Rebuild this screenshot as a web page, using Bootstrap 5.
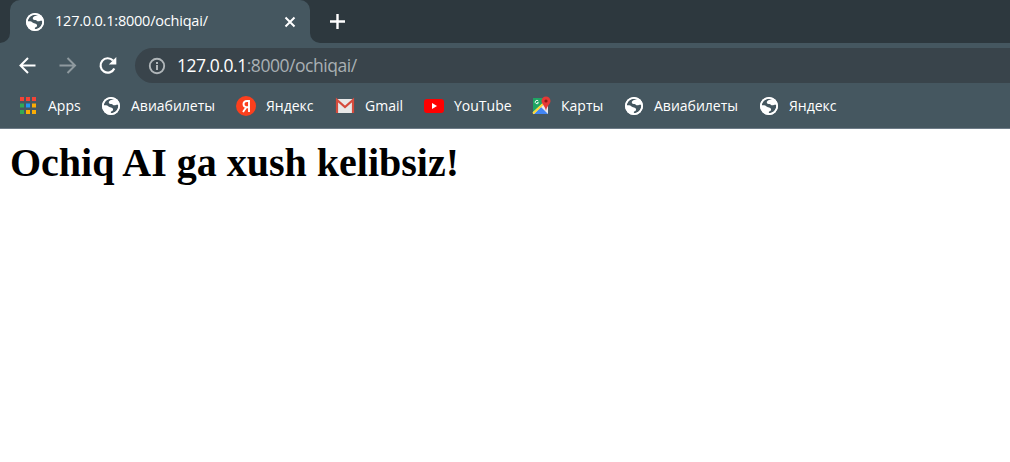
<!DOCTYPE html>
<html lang="uz">
<head>
<meta charset="utf-8">
<title>127.0.0.1:8000/ochiqai/</title>
<link href="https://cdn.jsdelivr.net/npm/bootstrap@5.3.0/dist/css/bootstrap.min.css" rel="stylesheet">
<style>
body{background:#fff;font-family:"Open Sans","Noto Sans",sans-serif;overflow:hidden}
.chrome-ui{background:#455760;border-bottom:1px solid #6d7b87;height:129px;color:#fff}
.tab-strip{height:43px;background:#2d383e}
.tab-edge{width:10px;background:#455760}
.tab-edge i{display:block;height:43px;background:#2d383e;border-bottom-right-radius:10px}
.tab-edge.after i{border-radius:0 0 0 10px}
.active-tab{width:300px;background:#455760;border-radius:10px 10px 0 0;padding:0 14px 0 15px}
.tab-name{font-size:14.5px;margin-left:10px;letter-spacing:-.21px;line-height:20px;margin-top:-2px}
.tool-row{height:45px;padding-left:18px}
.arrow-gap{margin-left:20px}
.address{height:35px;background:#39444b;border-radius:18px 0 0 18px;margin-left:16px;padding-left:13px}
.url{font-size:17.5px;letter-spacing:-.46px;margin-left:11px;line-height:24px;color:#a9b0b4;margin-top:-1px}
.url b{font-weight:400;color:#fff}
.marks{height:40px;padding:0 0 4px 18px;font-size:14px}
.marks a{color:#fff;text-decoration:none;line-height:20px}
.marks svg{width:20px;height:20px;margin-right:10px}
.marks span{letter-spacing:0}
svg{display:block;flex:none}
h1{font:700 40px/46px "Liberation Serif",serif;color:#000;margin:11px 0 0 10px}
</style>
</head>
<body>
<svg width="0" height="0" class="position-absolute"><defs>
<symbol id="globe" viewBox="0 0 20 20"><circle cx="10" cy="10" r="9" fill="#fff"/><path d="M13.500 3.500C11 3.200 7.800 4.500 7.800 6.400c0 1.400 1.500 1.500 2.700 1.500s1.300 1.400 2.800 1.400 2-.9 4-.6c.3 3.500-1.500 6.500-4.400 7.900-.8.400-2 .6-3 .6V15.700c1-.6 2.200-1 2.200-2.300S10.500 11.600 9 11.300 7 9.300 5 9.300H2.800C3 6 6 2.700 10 2.700z" fill="#455760"/><circle cx="10" cy="10" r="8.200" fill="none" stroke="#fff" stroke-width="1.700"/></symbol>
</defs></svg>
<header class="chrome-ui">
<div class="tab-strip d-flex">
<div class="tab-edge"><i></i></div>
<div class="active-tab d-flex align-items-center"><svg width="20" height="20"><use href="#globe"/></svg><span class="tab-name">127.0.0.1:8000/ochiqai/</span><svg class="ms-auto" width="12" height="12" viewBox="0 0 12 12"><path d="M1.500 1.500l9 9m0-9l-9 9" stroke="#fff" stroke-width="2"/></svg></div>
<div class="tab-edge after"><i></i></div>
<svg class="align-self-center ms-2" width="20" height="20" viewBox="0 0 20 20"><path d="M9.500 2v15M2 9.500h15" stroke="#fff" stroke-width="2.400"/></svg>
</div>
<div class="tool-row d-flex align-items-center">
<svg width="20" height="20" viewBox="0 0 20 20" fill="none" stroke="#fff" stroke-width="2"><path d="M17.500 9.500H3M10 2L2.500 9.500 10 17"/></svg>
<svg class="arrow-gap" width="20" height="20" viewBox="0 0 20 20" fill="none" stroke="#8f9a9f" stroke-width="2"><path d="M1.500 9.500H16M9.500 2L17 9.500 9.500 17"/></svg>
<svg class="arrow-gap" width="21" height="20" viewBox="0 0 21 20"><path d="M15 4.500A7.200 7.200 0 1 0 16.300 12.500" fill="none" stroke="#fff" stroke-width="2.200"/><path d="M18.300 1v7.500h-7.500z" fill="#fff"/></svg>
<div class="address flex-grow-1 d-flex align-items-center"><svg width="18" height="18" viewBox="0 0 18 18"><circle cx="9" cy="9" r="7.200" fill="none" stroke="#b0b6b9" stroke-width="1.900"/><path d="M9 8v5M9 5v2" stroke="#b0b6b9" stroke-width="2"/></svg><span class="url"><b>127.0.0.1</b>:8000/ochiqai/</span></div>
</div>
<nav class="marks d-flex align-items-center">
<a href="#" class="d-flex align-items-center" style="width:83px"><svg viewBox="0 0 20 20"><path d="M2 1h4v4H2zM8 1h4v4H8zM14 1h4v4h-4z" fill="#f44336"/><path d="M2 7.500h4v4H2zM2 14h4v4H2z" fill="#34a853"/><path d="M8 7.500h4v4H8z" fill="#2196f3"/><path d="M14 7.500h4v4h-4zM14 14h4v4h-4zM8 14h4v4H8z" fill="#fbac05"/></svg><span>Apps</span></a>
<a href="#" class="d-flex align-items-center" style="width:135px"><svg><use href="#globe"/></svg><span>Авиабилеты</span></a>
<a href="#" class="d-flex align-items-center" style="width:99px"><svg viewBox="0 0 20 20"><circle cx="10" cy="10" r="10" fill="#fc3f1d"/><path d="M13 4v12M13 5h-2C8.500 5 7.500 6.500 7.500 8c0 1.800 1 2.800 2.500 3.200h3M10.500 11L7 16" fill="none" stroke="#fff" stroke-width="1.900"/></svg><span>Яндекс</span></a>
<a href="#" class="d-flex align-items-center" style="width:89px"><svg viewBox="0 0 20 20"><path d="M1 3h18v14H1z" fill="#e8e8e8"/><path d="M2 17V4l8 7 8-7v13" fill="none" stroke="#d54b3d" stroke-width="2.200"/></svg><span>Gmail</span></a>
<a href="#" class="d-flex align-items-center" style="width:107px"><svg viewBox="0 0 20 20"><rect y="3" width="20" height="14" rx="3" fill="#f00"/><path d="M8 7l5 3-5 3z" fill="#fff"/></svg><span>YouTube</span></a>
<a href="#" class="d-flex align-items-center" style="width:93px"><svg viewBox="0 0 20 20"><path d="M2 2h15v16H2z" fill="#e8eaed"/><path d="M2 2h12l-2 5-10 9z" fill="#1fa463"/><path d="M3 18l7-7 7 7z" fill="#4285f4"/><path d="M2 17.500L12 8" stroke="#fdd835" stroke-width="2"/><path d="M7.300 5A1.700 1.700 0 1 0 7.500 6.700H6" fill="none" stroke="#fff" stroke-width=".9"/><path d="M15 .5a4.500 4.500 0 0 1 4.500 4.500c0 3-3.500 4.700-4.500 9.700-1-5-4.500-6.700-4.500-9.700A4.500 4.500 0 0 1 15 .5z" fill="#e53935"/><circle cx="15" cy="5" r="1.600" fill="#8b1a14"/></svg><span>Карты</span></a>
<a href="#" class="d-flex align-items-center" style="width:135px"><svg><use href="#globe"/></svg><span>Авиабилеты</span></a>
<a href="#" class="d-flex align-items-center"><svg><use href="#globe"/></svg><span>Яндекс</span></a>
</nav>
</header>
<main><h1>Ochiq AI ga xush kelibsiz!</h1></main>
<script src="https://cdn.jsdelivr.net/npm/bootstrap@5.3.0/dist/js/bootstrap.bundle.min.js"></script>
</body>
</html>
